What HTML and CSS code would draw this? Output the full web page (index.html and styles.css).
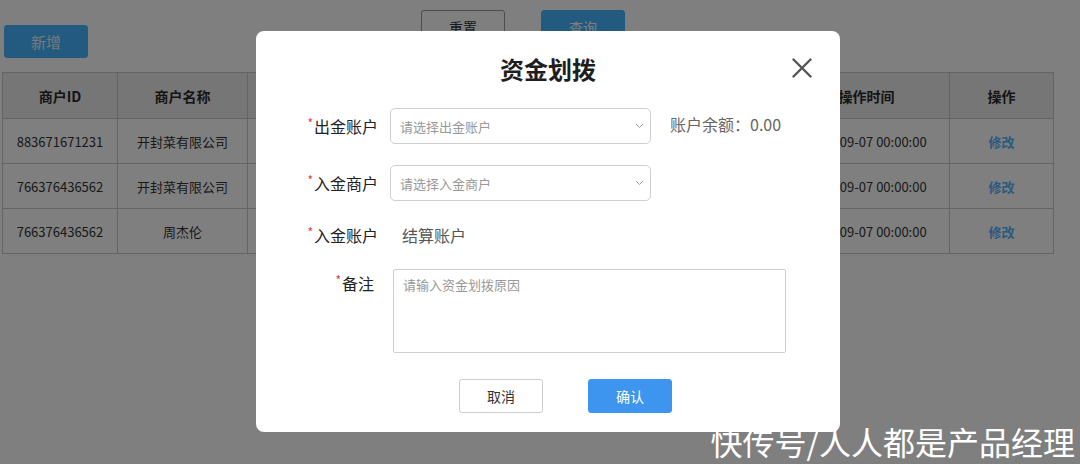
FILE: index.html
```html
<!DOCTYPE html>
<html lang="zh-CN">
<head>
  <meta charset="UTF-8" />
  <meta name="viewport" content="width=device-width, initial-scale=1.0"/>
  <title>资金划拨</title>
  <link rel="stylesheet" href="styles.css">
</head>
<body>

  <div class="page">
    <div class="toolbar">
      <button class="btn btn-primary btn-add">新增</button>
      <div class="search-actions">
        <button class="btn btn-default">重置</button>
        <button class="btn btn-primary">查询</button>
      </div>
    </div>

    <table class="list">
      <thead>
        <tr>
          <th class="col-id">商户ID</th>
          <th class="col-name">商户名称</th>
          <th class="col-type"></th>
          <th class="col-balance"></th>
          <th class="col-status"></th>
          <th class="col-user"></th>
          <th class="col-time">操作时间</th>
          <th class="col-op">操作</th>
        </tr>
      </thead>
      <tbody>
        <tr>
          <td>883671671231</td>
          <td>开封菜有限公司</td>
          <td></td>
          <td></td>
          <td></td>
          <td></td>
          <td class="time">2021-09-07 00:00:00</td>
          <td><a class="link">修改</a></td>
        </tr>
        <tr>
          <td>766376436562</td>
          <td>开封菜有限公司</td>
          <td></td>
          <td></td>
          <td></td>
          <td></td>
          <td class="time">2021-09-07 00:00:00</td>
          <td><a class="link">修改</a></td>
        </tr>
        <tr>
          <td>766376436562</td>
          <td>周杰伦</td>
          <td></td>
          <td></td>
          <td></td>
          <td></td>
          <td class="time">2021-09-07 00:00:00</td>
          <td><a class="link">修改</a></td>
        </tr>
      </tbody>
    </table>
  </div>

  <div class="mask"></div>

  <div class="dialog">
    <h2 class="dialog-title">资金划拨</h2>
    <button class="dialog-close" aria-label="关闭">
      <svg width="20" height="20" viewBox="0 0 20 20">
        <path d="M1.5 1.5 L18.5 18.5 M18.5 1.5 L1.5 18.5" stroke="#555" stroke-width="2.4" stroke-linecap="round" fill="none"/>
      </svg>
    </button>

    <div class="form">
      <div class="form-row row-1">
        <label class="form-label"><i>*</i>出金账户</label>
        <div class="select">
          <span>请选择出金账户</span>
          <svg width="9" height="6" viewBox="0 0 9 6"><path d="M1 1 L4.5 4.5 L8 1" stroke="#999" stroke-width="1" fill="none"/></svg>
        </div>
        <span class="balance">账户余额：0.00</span>
      </div>

      <div class="form-row row-2">
        <label class="form-label"><i>*</i>入金商户</label>
        <div class="select">
          <span>请选择入金商户</span>
          <svg width="9" height="6" viewBox="0 0 9 6"><path d="M1 1 L4.5 4.5 L8 1" stroke="#999" stroke-width="1" fill="none"/></svg>
        </div>
      </div>

      <div class="form-row row-3">
        <label class="form-label"><i>*</i>入金账户</label>
        <span class="value">结算账户</span>
      </div>

      <div class="form-row row-4">
        <label class="form-label label-top"><i>*</i>备注</label>
        <div class="textarea">请输入资金划拨原因</div>
      </div>
    </div>

    <div class="dialog-footer">
      <button class="btn btn-default">取消</button>
      <button class="btn btn-confirm">确认</button>
    </div>
  </div>

  <div class="watermark">快传号/人人都是产品经理</div>

</body>
</html>
```

FILE: styles.css
```css
* {
  box-sizing: border-box;
  margin: 0;
  padding: 0;
}

body {
  font-family: 'Noto Sans CJK SC', 'Noto Sans', sans-serif;
  background-color: #fff;
  color: #333;
  width: 1080px;
  height: 464px;
  overflow: hidden;
  position: relative;
}

.page {
  padding: 10px 0 0 2px;
}

.toolbar {
  display: flex;
  align-items: flex-start;
  height: 62px;
  padding-left: 2px;
}

.btn {
  width: 84px;
  height: 34px;
  border-radius: 3px;
  border: 1px solid #ccc;
  background-color: #fff;
  color: #333;
  font-family: inherit;
  font-size: 14px;
}

.btn-primary {
  background-color: #46b4ff;
  border-color: #46b4ff;
  color: #fff;
}

.btn-add {
  margin-top: 15px;
  height: 33px;
  font-size: 15px;
  color: #e8f4ff;
}

.search-actions {
  display: flex;
  gap: 36px;
  margin-left: 333px;
}

.search-actions .btn-default {
  border-color: #9a9a9a;
}

.list {
  width: 1052px;
  border-collapse: collapse;
  font-size: 13px;
  color: #333;
}

.list th,
.list td {
  border: 1px solid #c8c8c8;
  text-align: center;
  white-space: nowrap;
}

.list th {
  height: 46px;
  background-color: #ececec;
  font-size: 14px;
  font-weight: bold;
  color: #2a2a2a;
}

.list td {
  height: 45px;
}

.col-id { width: 115px; }
.col-name { width: 130px; }
.col-type { width: 150px; }
.col-balance { width: 150px; }
.col-status { width: 110px; }
.col-user { width: 127px; }
.col-time { width: 166px; }
.col-op { width: 104px; }

.link {
  color: #52b4ff;
  font-weight: bold;
}

.mask {
  position: absolute;
  inset: 0;
  background-color: rgba(0, 0, 0, 0.5);
}

.dialog {
  position: absolute;
  left: 256px;
  top: 31px;
  width: 584px;
  height: 401px;
  background-color: #fff;
  border-radius: 8px;
  padding-top: 22px;
}

.dialog-title {
  text-align: center;
  font-size: 24px;
  line-height: 32px;
  font-weight: bold;
  color: #1e1e1e;
}

.dialog-close {
  position: absolute;
  right: 28px;
  top: 27px;
  width: 20px;
  height: 20px;
  border: none;
  background: none;
}

.form {
  margin-top: 23px;
}

.form-row {
  display: flex;
  align-items: center;
  height: 36px;
}

.row-1 { margin-bottom: 21px; }
.row-2 { margin-bottom: 16px; }
.row-3 { margin-bottom: 16px; }

.row-4 {
  align-items: flex-start;
  height: auto;
}

.form-label {
  width: 122px;
  text-align: right;
  font-size: 16px;
  color: #222;
  margin-right: 12px;
}

.form-label i {
  font-style: normal;
  color: #e8343c;
  font-size: 12px;
  vertical-align: 5px;
  margin-right: 1px;
}

.label-top {
  padding-top: 2px;
  width: 118px;
  margin-right: 19px;
}

.select {
  width: 261px;
  height: 36px;
  border: 1px solid #cfcfcf;
  border-radius: 5px;
  display: flex;
  align-items: center;
  justify-content: space-between;
  padding: 0 6px 0 9px;
  font-size: 13px;
  color: #999;
}

.balance {
  margin-left: 19px;
  font-size: 16px;
  color: #666;
  margin-top: -4px;
}

.value {
  margin-left: 12px;
  font-size: 16px;
  color: #555;
}

.textarea {
  width: 393px;
  height: 84px;
  border: 1px solid #cfcfcf;
  border-radius: 2px;
  padding: 5px 9px;
  font-size: 13px;
  color: #999;
}

.dialog-footer {
  display: flex;
  gap: 45px;
  padding-left: 203px;
  margin-top: 26px;
}

.btn-confirm {
  background-color: #3d95f0;
  border-color: #3d95f0;
  color: #fff;
}

.watermark {
  position: absolute;
  right: 5px;
  bottom: 0;
  font-size: 32px;
  line-height: normal;
  color: #fff;
}
```
